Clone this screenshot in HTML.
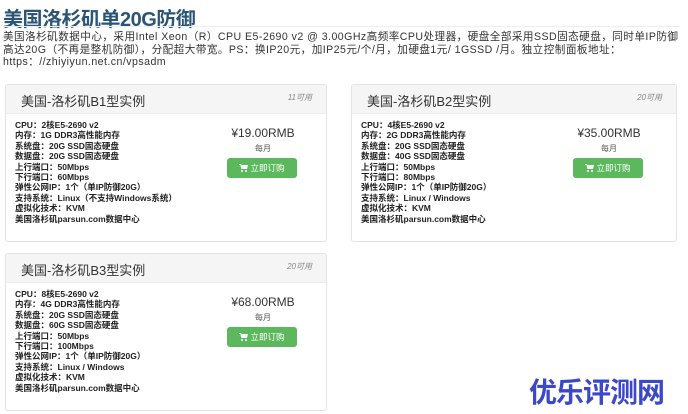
<!DOCTYPE html>
<html><head><meta charset="utf-8"><style>
body{margin:0;width:688px;height:414px;background:#fff;font-family:"Liberation Sans","Noto Sans CJK SC",sans-serif;position:relative;overflow:hidden;color:#333}
.t{position:absolute;left:3px;top:3px;font-size:20px;font-weight:bold;color:#2b5576;letter-spacing:-0.5px}
.hr{position:absolute;left:3px;right:8px;top:26px;border-top:1px solid #eee}
.d{position:absolute;left:3px;top:31px;width:684px;font-size:10.6px;line-height:12.5px;color:#333;letter-spacing:0.45px;white-space:nowrap}
.card{position:absolute;width:320px;height:156px;border:1px solid #e3e3e3;border-radius:3px;background:#fff}
.h{height:28px;background:#f5f5f5;border-bottom:1px solid #eee;position:relative}
.h b{position:absolute;left:15px;top:6px;font-size:13px;font-weight:normal;color:#333}
.h i{position:absolute;right:14px;top:7px;font-size:8px;color:#888}
.l{position:absolute;left:9px;top:35px;font-size:8.5px;font-weight:bold;line-height:10.4px;color:#222;white-space:nowrap}
.p{position:absolute;left:212px;top:41px;width:90px;text-align:center;font-size:12px;color:#333}
.m{position:absolute;left:222px;top:58px;width:70px;text-align:center;font-size:8px;color:#555}
.btn{position:absolute;left:221px;top:73px;width:70px;height:20px;background:#5cb85c;border-radius:3px;color:#fff;font-size:8.5px;line-height:20px;text-align:center}
.btn svg{vertical-align:-1px;margin-right:2px}
.w{position:absolute;left:529px;top:371px;font-size:28px;font-weight:bold;color:#3b48c8;letter-spacing:-1px}
</style></head><body>
<div class="t">美国洛杉矶单20G防御</div>
<div class="hr"></div>
<div class="d">美国洛杉矶数据中心，采用Intel Xeon（R）CPU E5-2690 v2 @ 3.00GHz高频率CPU处理器，硬盘全部采用SSD固态硬盘，同时单IP防御<br>高达20G（不再是整机防御），分配超大带宽。PS：换IP20元，加IP25元/个/月，加硬盘1元/ 1GSSD /月。独立控制面板地址：<br>https：//zhiyiyun.net.cn/vpsadm</div>

<div class="card" style="left:5px;top:84px">
<div class="h"><b>美国-洛杉矶B1型实例</b><i>11可用</i></div>
<div class="l">CPU：2核E5-2690 v2<br>内存：1G DDR3高性能内存<br>系统盘：20G SSD固态硬盘<br>数据盘：20G SSD固态硬盘<br>上行端口：50Mbps<br>下行端口：60Mbps<br>弹性公网IP：1个（单IP防御20G）<br>支持系统：Linux（不支持Windows系统）<br>虚拟化技术：KVM<br>美国洛杉矶parsun.com数据中心</div>
<div class="p">¥19.00RMB</div><div class="m">每月</div><div class="btn"><svg width="9" height="8" viewBox="0 0 9 8"><path d="M0 0h2l.5 1H9l-1 4H2.5L1.3 1H0z" fill="#fff"/><circle cx="3" cy="7" r="1" fill="#fff"/><circle cx="7" cy="7" r="1" fill="#fff"/></svg>立即订购</div>
</div>

<div class="card" style="left:351px;top:84px;width:324px">
<div class="h"><b>美国-洛杉矶B2型实例</b><i>20可用</i></div>
<div class="l">CPU：4核E5-2690 v2<br>内存：2G DDR3高性能内存<br>系统盘：20G SSD固态硬盘<br>数据盘：40G SSD固态硬盘<br>上行端口：50Mbps<br>下行端口：80Mbps<br>弹性公网IP：1个（单IP防御20G）<br>支持系统：Linux / Windows<br>虚拟化技术：KVM<br>美国洛杉矶parsun.com数据中心</div>
<div class="p">¥35.00RMB</div><div class="m">每月</div><div class="btn"><svg width="9" height="8" viewBox="0 0 9 8"><path d="M0 0h2l.5 1H9l-1 4H2.5L1.3 1H0z" fill="#fff"/><circle cx="3" cy="7" r="1" fill="#fff"/><circle cx="7" cy="7" r="1" fill="#fff"/></svg>立即订购</div>
</div>

<div class="card" style="left:5px;top:253px">
<div class="h"><b>美国-洛杉矶B3型实例</b><i>20可用</i></div>
<div class="l">CPU：8核E5-2690 v2<br>内存：4G DDR3高性能内存<br>系统盘：20G SSD固态硬盘<br>数据盘：60G SSD固态硬盘<br>上行端口：50Mbps<br>下行端口：100Mbps<br>弹性公网IP：1个（单IP防御20G）<br>支持系统：Linux / Windows<br>虚拟化技术：KVM<br>美国洛杉矶parsun.com数据中心</div>
<div class="p">¥68.00RMB</div><div class="m">每月</div><div class="btn"><svg width="9" height="8" viewBox="0 0 9 8"><path d="M0 0h2l.5 1H9l-1 4H2.5L1.3 1H0z" fill="#fff"/><circle cx="3" cy="7" r="1" fill="#fff"/><circle cx="7" cy="7" r="1" fill="#fff"/></svg>立即订购</div>
</div>

<div class="w">优乐评测网</div>
</body></html>
